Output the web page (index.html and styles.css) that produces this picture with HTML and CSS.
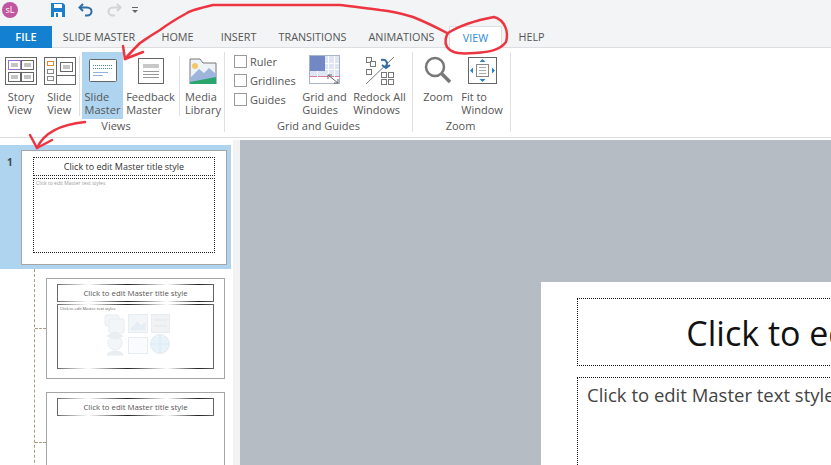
FILE: index.html
```html
<!DOCTYPE html>
<html>

<head>
    <meta charset="utf-8">
    <title>Slide Master</title>
    <link rel="stylesheet" href="styles.css">
</head>

<body>
    <div class="app">
        <!-- quick access -->
        <div class="titlebar">
            <div class="avatar">sL</div>
            <div class="quick">
                <svg width="16" height="16" viewBox="0 0 16 16">
                    <path d="M1 1h12l2 2v12H1z" fill="#1a7fd0" />
                    <path d="M4 2h8v4H4z" fill="#fff" />
                    <path d="M4 10h8v5H4z" fill="#fff" />
                    <path d="M6 11h2v4H6z" fill="#1a7fd0" />
                </svg>
                <svg width="16" height="14" viewBox="0 0 16 14">
                    <path d="M5 1L1.500 4.500 5 8" fill="none" stroke="#2f6ea5" stroke-width="2" />
                    <path d="M2 4.500h7c6 0 6 8 0 8H7" fill="none" stroke="#2f6ea5" stroke-width="2" />
                </svg>
                <svg width="16" height="14" viewBox="0 0 16 14">
                    <path d="M11 1l3.500 3.500L11 8" fill="none" stroke="#d2d4d6" stroke-width="2" />
                    <path d="M14 4.500H7c-6 0-6 8 0 8h2" fill="none" stroke="#d2d4d6" stroke-width="2" />
                </svg>
                <svg class="more" width="8" height="8" viewBox="0 0 8 8">
                    <path d="M1 1h6v1H1z" fill="#666" />
                    <path d="M1 4h6L4 7z" fill="#666" />
                </svg>
            </div>
        </div>

        <!-- tabs -->
        <div class="tabs">
            <div class="tab file">FILE</div>
            <div class="tab tab-master">SLIDE MASTER</div>
            <div class="tab tab-home">HOME</div>
            <div class="tab tab-insert">INSERT</div>
            <div class="tab tab-trans">TRANSITIONS</div>
            <div class="tab tab-anim">ANIMATIONS</div>
            <div class="tab active">VIEW</div>
            <div class="tab tab-help">HELP</div>
        </div>

        <!-- ribbon -->
        <div class="ribbon">
            <div class="group views">
                <div class="group-items">
                    <div class="btn story">
                        <svg width="32" height="28" viewBox="0 0 32 28">
                            <rect x="0.500" y="0.500" width="31" height="27" fill="#fff" stroke="#666" />
                            <rect x="3.500" y="3.500" width="12" height="9" fill="#fff" stroke="#9a6fd0" />
                            <rect x="16.500" y="3.500" width="12" height="9" fill="#fff" stroke="#666" />
                            <rect x="3.500" y="15.500" width="12" height="9" fill="#fff" stroke="#666" />
                            <rect x="16.500" y="15.500" width="12" height="9" fill="#fff" stroke="#666" />
                            <path d="M6 7h7M6 9h7M19 7h7M19 9h7M6 19h7M6 21h7M19 19h7M19 21h7" stroke="#888" />
                        </svg>
                        <span>Story<br>View</span>
                    </div>
                    <div class="btn slideview">
                        <svg width="32" height="28" viewBox="0 0 32 28">
                            <rect x="0.500" y="0.500" width="31" height="27" fill="#fff" stroke="#666" />
                            <path d="M12.500 1v26M12.500 18.500h19" stroke="#666" />
                            <rect x="3.500" y="4.500" width="6" height="4" fill="#fff" stroke="#e08a2c" />
                            <rect x="3.500" y="12.500" width="6" height="4" fill="#fff" stroke="#888" />
                            <rect x="3.500" y="19.500" width="6" height="4" fill="#fff" stroke="#888" />
                            <rect x="16.500" y="5.500" width="12" height="9" fill="#fff" stroke="#666" />
                            <path d="M19 9h7M19 11h7" stroke="#888" />
                        </svg>
                        <span>Slide<br>View</span>
                    </div>
                    <div class="sep sep-first"></div>
                    <div class="btn master selected">
                        <svg width="28" height="23" viewBox="0 0 28 23">
                            <rect x="0.500" y="0.500" width="27" height="22" rx="1" fill="#fff" stroke="#666" />
                            <path d="M4 6.500h20M4 9.500h20" stroke="#4a82c0" stroke-dasharray="1 1" />
                            <path d="M4 13.500h15M4 16.500h10" stroke="#8db4d8" />
                        </svg>
                        <span>Slide<br>Master</span>
                    </div>
                    <div class="btn feedback">
                        <svg width="26" height="26" viewBox="0 0 26 26">
                            <rect x="0.500" y="0.500" width="25" height="25" fill="#fff" stroke="#666" />
                            <rect x="5" y="6" width="16" height="4" fill="#c8c8c8" />
                            <path d="M5 13.500h16M5 16.500h16M5 19.500h16" stroke="#999" />
                        </svg>
                        <span>Feedback<br>Master</span>
                    </div>
                    <div class="sep"></div>
                    <div class="btn media">
                        <svg width="28" height="26" viewBox="0 0 28 26">
                            <path d="M1 26V1h10l3 4h13v21z" fill="#eef3f8" stroke="#777" />
                            <path d="M1 20l9-9 5 4 5-5 7 6v10H1z" fill="#9db4dc" />
                            <path d="M1 24l26-5v7H1z" fill="#2aa56c" />
                            <circle cx="6" cy="8" r="3" fill="#f2c867" />
                        </svg>
                        <span>Media<br>Library</span>
                    </div>
                </div>
                <div class="group-label">Views</div>
            </div>

            <div class="group guides">
                <div class="group-items">
                    <div class="checks">
                        <div class="check"><i></i>Ruler</div>
                        <div class="check"><i></i>Gridlines</div>
                        <div class="check"><i></i>Guides</div>
                    </div>
                    <div class="btn grid-btn">
                        <svg width="32" height="30" viewBox="0 0 32 30">
                            <rect x="0.500" y="0.500" width="30" height="28" fill="#e0e5f3" stroke="#a8b4c8" />
                            <path d="M1 22h29v6H1z" fill="#fff" />
                            <rect x="1" y="1" width="15" height="15" fill="#7188c4" />
                            <path d="M1 21.500h30" stroke="#e07a98" />
                            <path d="M19.500 1v27M25.500 1v27M8.500 16v12M16 8.500h14M16 14.500h14" stroke="#fff" />
                            <path d="M19 20l10 8M19 20v4M19 20h4M29 28v-4M29 28h-4" fill="none" stroke="#666" />
                        </svg>
                        <span>Grid and<br>Guides</span>
                    </div>
                    <div class="btn redock">
                        <svg width="30" height="29" viewBox="0 0 30 29">
                            <path d="M1 28L29 1" stroke="#777" />
                            <rect x="1.500" y="1.500" width="5" height="5" fill="#fff" stroke="#777" />
                            <rect x="5.500" y="5.500" width="5" height="5" fill="#fff" stroke="#777" />
                            <rect x="1.500" y="13.500" width="5" height="5" fill="#fff" stroke="#777" />
                            <rect x="16.500" y="16.500" width="5" height="5" fill="#fff" stroke="#777" />
                            <rect x="23.500" y="16.500" width="5" height="5" fill="#fff" stroke="#777" />
                            <rect x="16.500" y="23.500" width="5" height="5" fill="#fff" stroke="#777" />
                            <rect x="23.500" y="23.500" width="5" height="5" fill="#fff" stroke="#777" />
                            <path d="M16 4c6-1 7 3 5 7M17 9l4 3 4-3" fill="none" stroke="#2f6ea5" stroke-width="2" />
                        </svg>
                        <span>Redock All<br>Windows</span>
                    </div>
                </div>
                <div class="group-label">Grid and Guides</div>
            </div>

            <div class="group zoom">
                <div class="group-items">
                    <div class="btn zoom-btn">
                        <svg width="28" height="28" viewBox="0 0 28 28">
                            <circle cx="11" cy="11" r="9" fill="#fff" stroke="#777" stroke-width="2.500" />
                            <path d="M18 18l8 8" stroke="#777" stroke-width="3.500" />
                        </svg>
                        <span>Zoom</span>
                    </div>
                    <div class="btn fit-btn">
                        <svg width="29" height="27" viewBox="0 0 29 27">
                            <rect x="0.500" y="0.500" width="28" height="26" fill="#fff" stroke="#666" />
                            <rect x="8.500" y="7.500" width="12" height="12" fill="#fff" stroke="#888" />
                            <path d="M11 10.500h7M11 13.500h7M11 16.500h7" stroke="#aaa" />
                            <path d="M14.500 2l3 3h-6zM14.500 25l3-3h-6zM2 13.500l3-3v6zM27 13.500l-3-3v6z" fill="#2f7fc8" />
                        </svg>
                        <span>Fit to<br>Window</span>
                    </div>
                </div>
                <div class="group-label">Zoom</div>
            </div>
        </div>

        <div class="main">
            <!-- slide list -->
            <div class="sidebar">
                <div class="thumb-row selected">
                    <div class="num">1</div>
                    <div class="thumb first">
                        <div class="ph ph-title">Click to edit Master title style</div>
                        <div class="ph ph-body">Click to edit Master text styles</div>
                    </div>
                </div>
                <div class="children">
                    <div class="child">
                        <div class="thumb layout">
                            <div class="ph ph-title fade">Click to edit Master title style</div>
                            <div class="ph ph-body fade">
                                Click to edit Master text styles
                                <div class="ghosts">
                                    <svg width="66" height="42" viewBox="0 0 66 42">
                                        <g fill="#f1f5f8" stroke="#e2e8ee">
                                            <rect x="1" y="1" width="14" height="11" rx="2" />
                                            <rect x="5" y="5" width="15" height="14" rx="2" />
                                            <rect x="24.500" y="0.500" width="19" height="18" />
                                            <path d="M27 15l6-7 4 4 4-3v7H27z" fill="#dfeaf4" />
                                            <rect x="47.500" y="0.500" width="18" height="18" fill="#eef0f1" />
                                            <path d="M50 6h13M50 12h13" stroke="#dcdfe2" />
                                            <circle cx="11" cy="29" r="7" />
                                            <path d="M3 22l8-4 8 4-8 3zM3 41c1-5 15-5 16 0z" fill="#e6ebee" />
                                            <rect x="24.500" y="23.500" width="19" height="16" fill="#fafbfc" />
                                            <circle cx="56" cy="30" r="9.500" fill="#e3eff8" />
                                            <path d="M46.500 30h19M56 20.500v19" stroke="#d5e5f2" />
                                        </g>
                                    </svg>
                                </div>
                            </div>
                        </div>
                    </div>
                    <div class="child">
                        <div class="thumb layout">
                            <div class="ph ph-title fade">Click to edit Master title style</div>
                        </div>
                    </div>
                </div>
            </div>
            <div class="splitter"></div>

            <!-- slide canvas -->
            <div class="canvas">
                <div class="slide">
                    <div class="big big-title">Click to edit Master title style</div>
                    <div class="big big-body">Click to edit Master text styles</div>
                </div>
            </div>
        </div>
    </div>

    <!-- hand drawn marks -->
    <svg class="marks" width="831" height="465" viewBox="0 0 831 465">
        <g fill="none" stroke="#ec3540" stroke-width="2.500" stroke-linecap="round" stroke-linejoin="round">
            <path d="M447 33C430 24 418 19 413 17C400 13 390 11 380 10C365 8 350 6 340 5L280 5L213 5C200 8 190 11 187 13C178 18 168 24 160 30C150 36 146 39 140 43C134 49 130 53 125 59" />
            <path d="M123 46L125 59L143 52" />
            <path d="M448 33C462 24 478 20 494 17C505 20 509 32 506 42C500 50 490 52 475 53C462 54 452 54 447 47C444 42 446 36 448 33Z" />
            <path d="M85 122C65 124 45 130 37 148" />
            <path d="M30 135L37 148L52 140" />
        </g>
    </svg>
</body>

</html>
```

FILE: styles.css
```css
body {
    margin: 0;
    background-color: #ffffff;
    font-family: 'Open Sans', sans-serif;
    color: #555555;
    overflow: hidden;
}

.app {
    width: 831px;
    height: 465px;
    display: flex;
    flex-direction: column;
    overflow: hidden;
}

.titlebar {
    height: 26px;
    flex: none;
    display: flex;
    align-items: center;
    box-sizing: border-box;
    background-color: #f2f4f6;
    padding: 0 0 6px 2px;
}

.avatar {
    width: 16px;
    height: 16px;
    border-radius: 50%;
    background-color: #c2559f;
    color: #ffffff;
    font-size: 9px;
    line-height: 16px;
    text-align: center;
}

.quick {
    display: flex;
    align-items: center;
    gap: 12px;
    margin-left: 32px;
}

.more {
    margin-left: -3px;
}

.tabs {
    height: 22px;
    flex: none;
    display: flex;
    box-sizing: border-box;
    background-color: #f2f4f6;
    border-bottom: 1px solid #dcdee0;
    font-size: 10.800px;
    line-height: 21px;
}

.tab {
    text-align: center;
    white-space: nowrap;
    color: #555555;
}

.tab-master {
    width: 94px;
}

.tab-home {
    width: 63px;
}

.tab-insert {
    width: 59px;
}

.tab-trans,
.tab-anim {
    width: 89px;
}

.tab-help {
    width: 59px;
}

.tab.file {
    width: 52px;
    height: 22px;
    background-color: #1380d0;
    color: #ffffff;
    font-weight: 600;
    font-size: 11px;
}

.tab.active {
    width: 53px;
    height: 22px;
    margin-left: 3px;
    background-color: #ffffff;
    color: #2a8bd6;
    border: 1px solid #dcdee0;
    border-bottom: none;
    box-sizing: border-box;
}

.ribbon {
    height: 90px;
    flex: none;
    display: flex;
    border-bottom: 1px solid #dcdee0;
    box-sizing: border-box;
    padding: 4px 0 0 0;
    background-color: #ffffff;
}

.group {
    display: flex;
    flex-direction: column;
    border-right: 1px solid #dfe1e3;
    height: 80px;
    box-sizing: border-box;
}

.group.views {
    width: 225px;
}

.group.guides {
    width: 188px;
}

.group.zoom {
    width: 98px;
}

.group-items {
    display: flex;
    height: 67px;
}

.group-label {
    font-size: 11px;
    line-height: 13px;
    text-align: center;
    color: #555555;
}

.views .group-label {
    padding-left: 8px;
}

.zoom .group-label {
    margin-right: 2px;
}

.btn {
    display: flex;
    flex-direction: column;
    align-items: center;
    font-size: 11px;
    line-height: 13px;
    white-space: nowrap;
    height: 67px;
    box-sizing: border-box;
    padding-top: 4px;
}

.btn svg {
    flex: none;
}

.story {
    width: 42px;
    padding-top: 5px;
}

.slideview {
    width: 35px;
    padding-top: 5px;
}

.story svg,
.slideview svg {
    margin-bottom: 5px;
}

.sep {
    width: 1px;
    height: 60px;
    margin: 4px 2px 0 1px;
    background-color: #dfe1e3;
}

.sep-first {
    margin-left: 2px;
}

.master {
    width: 41px;
    padding-top: 7px;
}

.master.selected {
    background-color: #aed4f0;
}

.master svg {
    margin-bottom: 8px;
}

.feedback {
    width: 55px;
    padding-top: 6px;
}

.feedback svg {
    margin-bottom: 6px;
}

.media {
    width: 42px;
    padding-top: 6px;
}

.media svg {
    margin-bottom: 6px;
}

.checks {
    width: 72px;
    padding: 0 0 0 9px;
    box-sizing: border-box;
    font-size: 11px;
}

.check {
    display: flex;
    align-items: center;
    height: 19px;
    gap: 3px;
}

.check i {
    width: 11px;
    height: 11px;
    background-color: #ffffff;
    border: 1px solid #9a9a9a;
    flex: none;
}

.grid-btn {
    width: 55px;
    padding-top: 3px;
}

.grid-btn svg {
    margin-bottom: 5px;
}

.redock {
    width: 55px;
    padding-top: 4px;
}

.redock svg {
    margin-bottom: 5px;
}

.zoom-btn {
    width: 50px;
    padding-top: 4px;
}

.zoom-btn svg {
    margin-bottom: 6px;
}

.fit-btn {
    width: 38px;
    padding-top: 5px;
}

.fit-btn svg {
    margin-bottom: 6px;
}

.main {
    flex: 1;
    min-height: 0;
    display: flex;
}

.sidebar {
    width: 233px;
    flex: none;
    padding-top: 7px;
    overflow: hidden;
    box-sizing: border-box;
    background-color: #ffffff;
}

.splitter {
    width: 7px;
    flex: none;
    margin-top: 2px;
    background-color: #f3f3f3;
}

.thumb-row {
    width: 231px;
    height: 124px;
    display: flex;
    padding: 5px 4px 0 7px;
    box-sizing: border-box;
}

.thumb-row.selected {
    background-color: #aed4f0;
}

.num {
    width: 14px;
    font-size: 10px;
    font-weight: 700;
    line-height: 24px;
    color: #444444;
}

.thumb {
    background-color: #ffffff;
    border: 1px solid #a5a5a5;
    box-sizing: border-box;
    padding: 5px 10px;
    font-size: 7.800px;
    color: #555555;
}

.thumb.first {
    width: 206px;
    height: 115px;
    padding: 6px 11px;
    font-size: 9px;
    color: #333333;
}

.ph {
    box-sizing: border-box;
    border: 1px dotted #222222;
    text-align: center;
}

.ph-title {
    height: 19px;
    line-height: 17px;
    margin-bottom: 2px;
    white-space: nowrap;
}

.first .ph-title {
    font-weight: 500;
}

.ph-body {
    height: 75px;
    text-align: left;
    padding-left: 2px;
    font-size: 5px;
    line-height: 9px;
    color: #999999;
}

.children {
    margin-left: 34px;
    padding-top: 9px;
    border-left: 1px dashed #a89f80;
}

.child {
    display: flex;
    align-items: flex-start;
    margin-bottom: 13px;
}

.child::before {
    content: "";
    width: 11px;
    flex: none;
    border-top: 1px dashed #a89f80;
    margin-top: 50px;
}

.thumb.layout {
    width: 179px;
    height: 101px;
}

.fade {
    border: 1px solid #222222;
    border-image: linear-gradient(90deg, #666666, #ffffff 20%, #222222 45%, #ffffff 70%, #222222 90%, #666666) 1;
}

.layout .ph-title {
    height: 18px;
    line-height: 16px;
}

.layout .ph-body {
    height: 65px;
    color: #555555;
    font-size: 4px;
    line-height: 7px;
}

.ghosts {
    display: flex;
    justify-content: center;
    margin-top: 2px;
    opacity: 0.800;
}

.canvas {
    flex: 1;
    min-width: 0;
    overflow: hidden;
    margin-top: 2px;
    padding: 142px 0 0 301px;
    background-color: #b6bcc4;
}

.slide {
    width: 745px;
    height: 430px;
    padding: 16px 36px;
    box-sizing: border-box;
    background-color: #ffffff;
}

.big {
    border: 1px dotted #111111;
    box-sizing: border-box;
}

.big-title {
    height: 68px;
    line-height: 68px;
    font-size: 34px;
    text-align: center;
    color: #111111;
    white-space: nowrap;
    margin-bottom: 11px;
}

.big-body {
    height: 300px;
    padding: 4px 9px;
    font-size: 18.500px;
    color: #444444;
    white-space: nowrap;
}

.marks {
    position: absolute;
    left: 0;
    top: 0;
    pointer-events: none;
}
```
